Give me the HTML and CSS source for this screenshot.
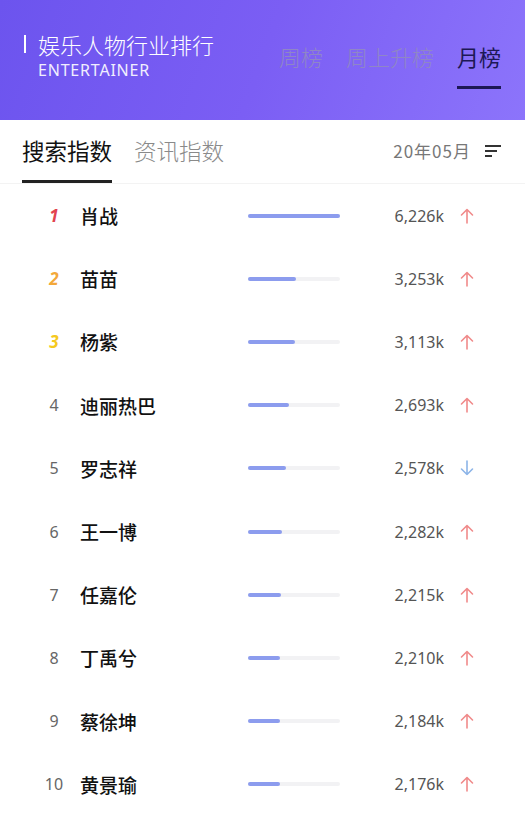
FILE: index.html
```html
<!DOCTYPE html>
<html lang="zh-CN">
<head>
    <meta charset="UTF-8">
    <meta name="viewport" content="width=device-width, initial-scale=1.0">
    <title>娱乐人物行业排行</title>
    <link rel="stylesheet" href="styles.css">
</head>
<body>
    <div class="header">
        <div class="title">
            <div class="title-cn"><span class="title-bar"></span>娱乐人物行业排行</div>
            <div class="title-en">ENTERTAINER</div>
        </div>
        <ul class="tabs">
            <li>周榜</li>
            <li>周上升榜</li>
            <li class="active">月榜</li>
        </ul>
    </div>
    <div class="subbar">
        <ul class="subtabs">
            <li class="active">搜索指数</li>
            <li>资讯指数</li>
        </ul>
        <div class="date">
            <span>20年05月</span>
            <span class="filter"><i></i><i></i><i></i></span>
        </div>
    </div>
    <ul class="rank-list">
        <li class="row"><span class="no no1">1</span><span class="name">肖战</span><span class="bar"><i style="width:100%"></i></span><span class="val">6,226k</span><svg class="arrow up" viewBox="0 0 14 16"><path d="M7 1.5V15M1.5 7L7 1.5L12.5 7"/></svg></li>
        <li class="row"><span class="no no2">2</span><span class="name">苗苗</span><span class="bar"><i style="width:52%"></i></span><span class="val">3,253k</span><svg class="arrow up" viewBox="0 0 14 16"><path d="M7 1.5V15M1.5 7L7 1.5L12.5 7"/></svg></li>
        <li class="row"><span class="no no3">3</span><span class="name">杨紫</span><span class="bar"><i style="width:51%"></i></span><span class="val">3,113k</span><svg class="arrow up" viewBox="0 0 14 16"><path d="M7 1.5V15M1.5 7L7 1.5L12.5 7"/></svg></li>
        <li class="row"><span class="no">4</span><span class="name">迪丽热巴</span><span class="bar"><i style="width:45%"></i></span><span class="val">2,693k</span><svg class="arrow up" viewBox="0 0 14 16"><path d="M7 1.5V15M1.5 7L7 1.5L12.5 7"/></svg></li>
        <li class="row"><span class="no">5</span><span class="name">罗志祥</span><span class="bar"><i style="width:41%"></i></span><span class="val">2,578k</span><svg class="arrow down" viewBox="0 0 14 16"><path d="M7 1V14.5M1.5 9L7 14.5L12.5 9"/></svg></li>
        <li class="row"><span class="no">6</span><span class="name">王一博</span><span class="bar"><i style="width:37%"></i></span><span class="val">2,282k</span><svg class="arrow up" viewBox="0 0 14 16"><path d="M7 1.5V15M1.5 7L7 1.5L12.5 7"/></svg></li>
        <li class="row"><span class="no">7</span><span class="name">任嘉伦</span><span class="bar"><i style="width:36%"></i></span><span class="val">2,215k</span><svg class="arrow up" viewBox="0 0 14 16"><path d="M7 1.5V15M1.5 7L7 1.5L12.5 7"/></svg></li>
        <li class="row"><span class="no">8</span><span class="name">丁禹兮</span><span class="bar"><i style="width:35%"></i></span><span class="val">2,210k</span><svg class="arrow up" viewBox="0 0 14 16"><path d="M7 1.5V15M1.5 7L7 1.5L12.5 7"/></svg></li>
        <li class="row"><span class="no">9</span><span class="name">蔡徐坤</span><span class="bar"><i style="width:35%"></i></span><span class="val">2,184k</span><svg class="arrow up" viewBox="0 0 14 16"><path d="M7 1.5V15M1.5 7L7 1.5L12.5 7"/></svg></li>
        <li class="row"><span class="no">10</span><span class="name">黄景瑜</span><span class="bar"><i style="width:35%"></i></span><span class="val">2,176k</span><svg class="arrow up" viewBox="0 0 14 16"><path d="M7 1.5V15M1.5 7L7 1.5L12.5 7"/></svg></li>
    </ul>
</body>
</html>
```
FILE: styles.css
```css
*{
    margin: 0;
    padding: 0;
    list-style: none;
    box-sizing: border-box;
}
body{
    width: 525px;
    font-family: "Noto Sans CJK SC", "Noto Sans", sans-serif;
    background-color: #fff;
    color: #111;
}
/* 头部 */
.header{
    height: 120px;
    background: linear-gradient(110deg, #6c54ee 0%, #7b5ef4 50%, #8c74fb 100%);
    display: flex;
    justify-content: space-between;
    padding: 29px 24px 0 24px;
}
.title-cn{
    display: flex;
    align-items: center;
    color: #fff;
    font-size: 22px;
    line-height: 30px;
    font-weight: 300;
}
.title-bar{
    width: 2px;
    height: 18px;
    background-color: #fff;
    margin-right: 12px;
}
.title-en{
    color: #f1eefe;
    font-family: "Noto Sans", sans-serif;
    font-size: 16px;
    letter-spacing: 0.8px;
    line-height: 22px;
    padding-left: 14px;
}
.tabs{
    display: flex;
    gap: 23px;
    padding-top: 12px;
}
.tabs li{
    font-size: 22px;
    line-height: 30px;
    color: #8f86c6;
    height: 48px;
    font-weight: 300;
}
.tabs li.active{
    color: #1d1855;
    border-bottom: 3px solid #1d1855;
    font-weight: 400;
}
/* 子标签 */
.subbar{
    display: flex;
    justify-content: space-between;
    align-items: flex-start;
    padding: 0 24px 0 22px;
    border-bottom: 1px solid #f3f3f3;
    height: 64px;
}
.subtabs{
    display: flex;
    gap: 22px;
    padding-top: 14px;
}
.subtabs li{
    font-size: 22.5px;
    line-height: 32px;
    color: #8a8a8a;
    height: 49px;
    font-weight: 300;
}
.subtabs li.active{
    color: #111;
    border-bottom: 3px solid #222;
    font-weight: 400;
}
.date{
    display: flex;
    align-items: center;
    gap: 14px;
    padding-top: 20px;
    font-size: 17px;
    letter-spacing: 1px;
    color: #777;
    line-height: 22px;
}
.filter{
    display: flex;
    flex-direction: column;
    gap: 3px;
    width: 16px;
}
.filter i{
    display: block;
    height: 2px;
    background-color: #333;
    width: 16px;
}
.filter i:nth-child(2){
    width: 12px;
}
.filter i:nth-child(3){
    width: 7px;
}
/* 列表 */
.row{
    display: grid;
    grid-template-columns: 24px 182px 92px 104px 30px;
    align-items: center;
    height: 63.2px;
    padding-left: 42px;
}
.no{
    text-align: center;
    font-family: "Noto Sans", sans-serif;
    font-size: 16px;
    color: #666;
}
.no1,.no2,.no3{
    font-style: italic;
    font-weight: 700;
    font-size: 17px;
}
.no1{
    color: #e2434f;
}
.no2{
    color: #f3a83a;
}
.no3{
    color: #f5c91e;
}
.name{
    padding-left: 14px;
    font-size: 19px;
    color: #111;
    font-weight: 500;
}
.bar{
    height: 4px;
    background-color: #f2f2f4;
    border-radius: 2px;
}
.bar i{
    display: block;
    height: 4px;
    border-radius: 2px;
    background-color: #8c9cee;
}
.val{
    text-align: right;
    font-family: "Noto Sans", sans-serif;
    font-size: 16px;
    color: #555;
}
.arrow{
    justify-self: end;
    width: 14px;
    height: 16px;
    fill: none;
    stroke-width: 1.6;
    stroke-linecap: round;
    stroke-linejoin: round;
}
.arrow.up{
    stroke: #f08a8a;
}
.arrow.down{
    stroke: #8db5e8;
}
```
